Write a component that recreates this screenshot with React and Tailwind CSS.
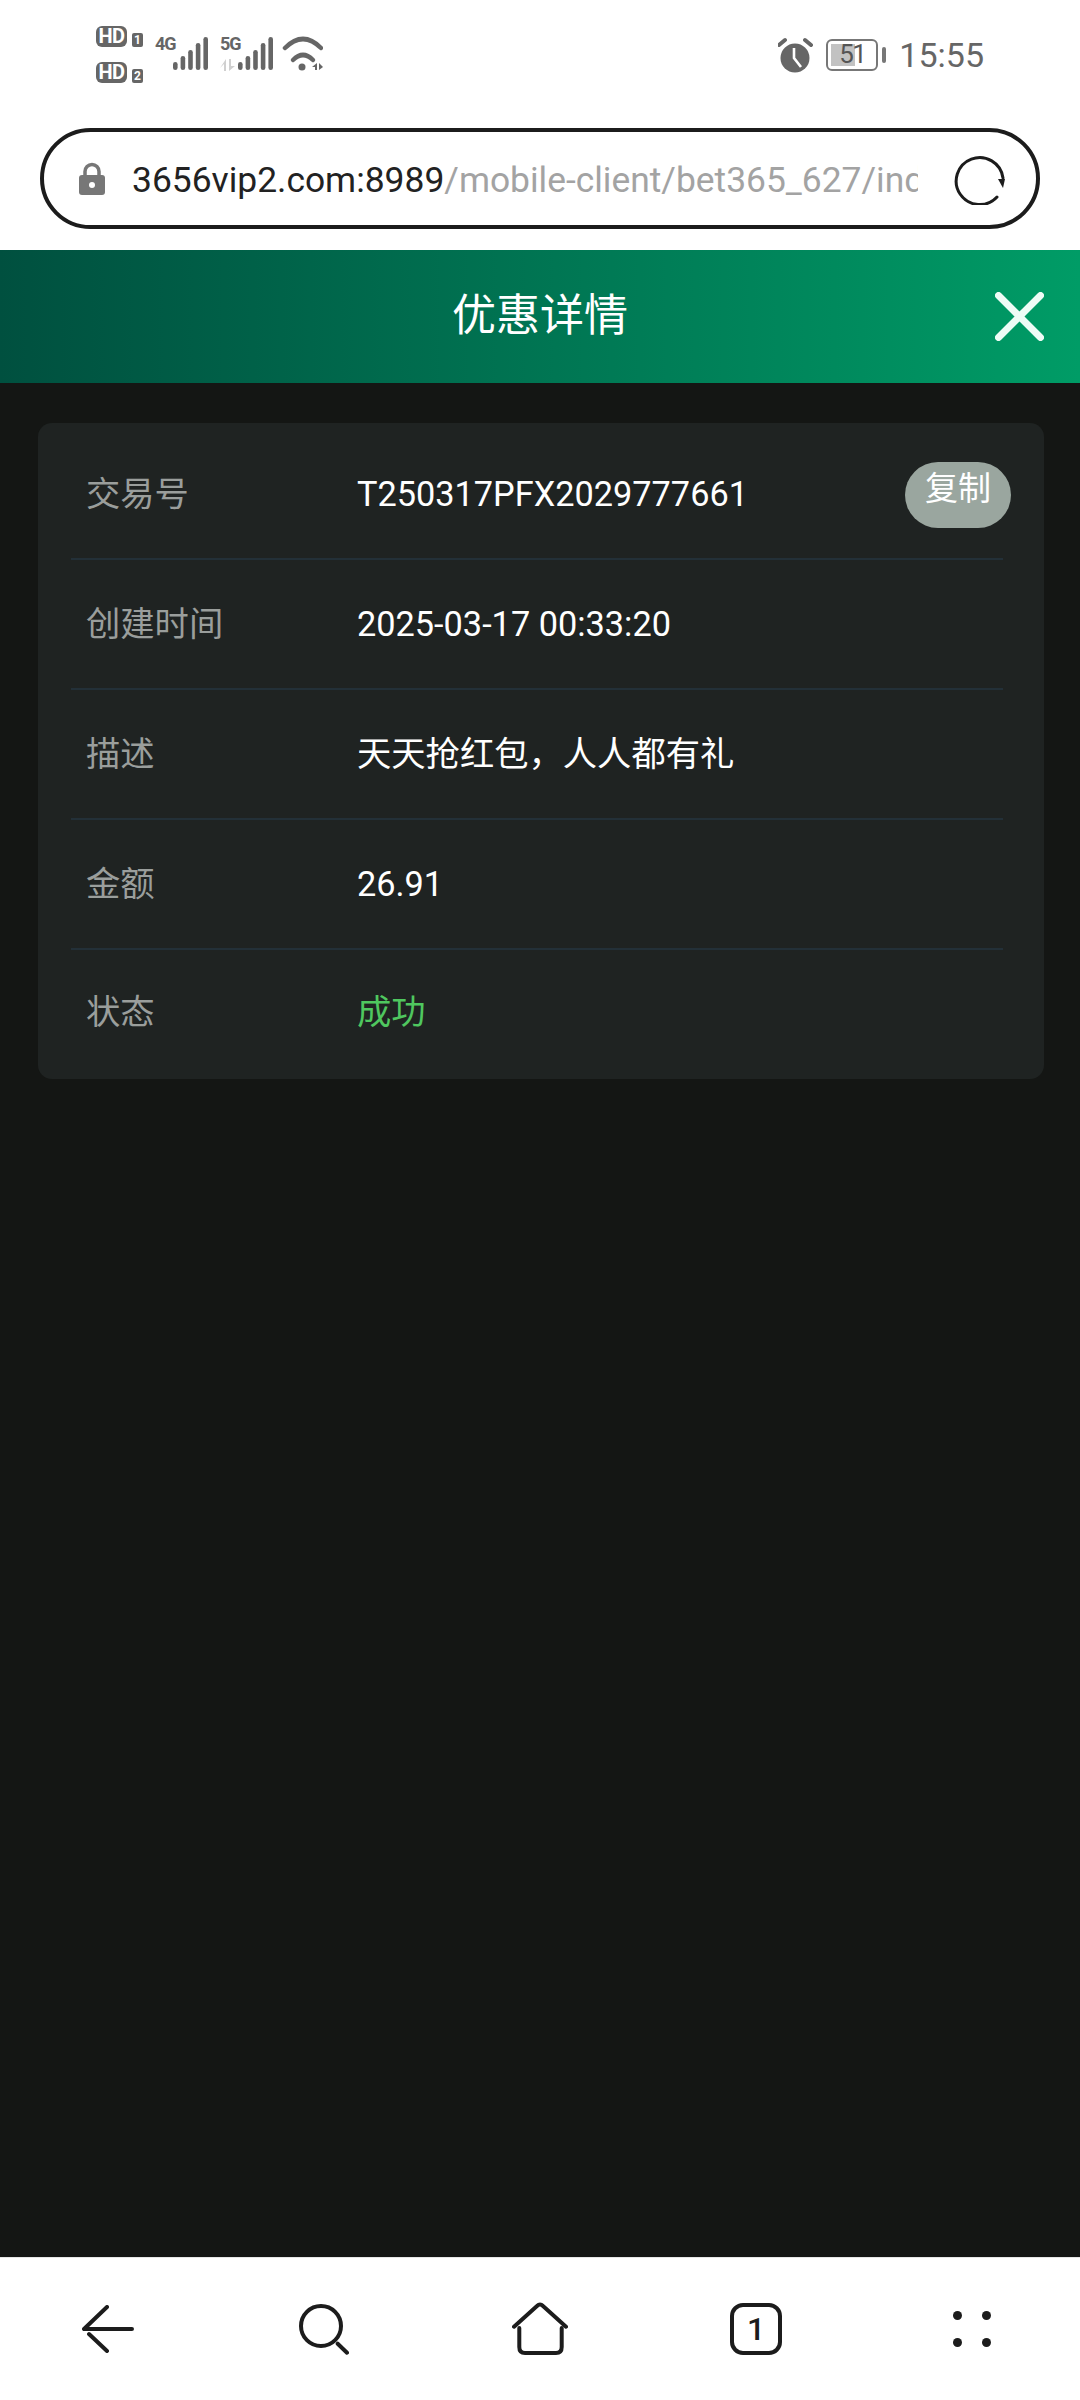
const rows = [
  { label: "交易号", value: "T250317PFX2029777661", copy: true },
  { label: "创建时间", value: "2025-03-17 00:33:20" },
  { label: "描述", value: "天天抢红包，人人都有礼" },
  { label: "金额", value: "26.91" },
  { label: "状态", value: "成功", green: true },
];

const font = "font-['Roboto','Noto_Sans_CJK_SC',sans-serif]";

function Bars({ className }) {
  return (
    <svg width="35" height="33" viewBox="0 0 35 33" className={className} fill="#666">
      <rect x="0" y="25" width="4.6" height="8" rx="2.3" />
      <rect x="7.6" y="19" width="4.6" height="14" rx="2.3" />
      <rect x="15.2" y="13" width="4.6" height="20" rx="2.3" />
      <rect x="22.8" y="6" width="4.6" height="27" rx="2.3" />
      <rect x="30.4" y="0" width="4.6" height="33" rx="2.3" />
    </svg>
  );
}

function HdBadge({ n }) {
  return (
    <div className="flex items-end gap-[5px] h-[21px]">
      <div className="w-[31px] h-[21px] rounded-[6px] bg-[#666] text-white text-[20px] font-bold leading-[21px] text-center tracking-[-0.5px]">
        HD
      </div>
      <div className="w-[11px] h-[14px] rounded-[2px] bg-[#666] text-white text-[12px] font-bold leading-[14px] text-center">
        {n}
      </div>
    </div>
  );
}

function StatusBar() {
  return (
    <div className={`flex items-start justify-between h-[128px] pl-[96px] pr-[96px] ${font}`}>
      <div className="flex items-start pt-[26px]">
        <div className="flex flex-col gap-[15px]">
          <HdBadge n="1" />
          <HdBadge n="2" />
        </div>
        <div className="relative ml-[12px] mt-[9px] w-[56px] h-[36px]">
          <span className="absolute left-0 top-[1px] text-[18px] font-bold leading-[16px] text-[#666] tracking-[-1px]">4G</span>
          <Bars className="absolute left-[18px] top-[2px]" />
        </div>
        <div className="relative ml-[9px] mt-[9px] w-[56px] h-[36px]">
          <span className="absolute left-0 top-[1px] text-[18px] font-bold leading-[16px] text-[#666] tracking-[-1px]">5G</span>
          <svg width="16" height="12" viewBox="0 0 16 12" className="absolute left-0 top-[24px]" fill="#d0d0d0">
            <path d="M6 0 V12 H4 V5 L0 9 Z" />
            <path d="M9 0 H11 V7 L15 7 L9 12 Z" />
          </svg>
          <Bars className="absolute left-[18px] top-[2px]" />
        </div>
        <svg width="42" height="36" viewBox="0 0 42 36" className="ml-[5px] mt-[9px]" fill="none" stroke="#666" strokeLinecap="round">
          <path d="M4 13 Q22 -5 40 13" strokeWidth="4.5" />
          <path d="M12 25 Q22 15 32 25" strokeWidth="4.5" />
          <circle cx="21" cy="32" r="3.5" fill="#666" stroke="none" />
          <path d="M36 28 V35 H34 V32 H31 Z" fill="#666" stroke="none" />
          <path d="M38 28 L42 32 L38 35 Z" fill="#666" stroke="none" />
        </svg>
      </div>
      <div className="flex items-center pt-[35px]">
        <svg width="36" height="38" viewBox="0 0 36 38" fill="none" className="mr-[12px]">
          <circle cx="17" cy="22" r="14.5" fill="#666" />
          <path d="M16 12 V22 L23 31" stroke="#fff" strokeWidth="2.6" />
          <path d="M1 9 L7 4 M33 9 L27 4" stroke="#666" strokeWidth="4" strokeLinecap="round" />
        </svg>
        <div className="relative w-[52px] h-[32px] rounded-[6px] border-[2.5px] border-[#777] p-[3px]">
          <div className="w-[24px] h-full bg-[#c2c2c2]" />
          <span className="absolute inset-0 text-center text-[26px] tracking-[-1.5px] leading-[27px] text-[#555]">51</span>
        </div>
        <div className="ml-[4px] w-[4px] h-[16px] rounded-[2px] bg-[#777]" />
        <span className="ml-[13px] text-[34px] leading-[40px] text-[#666]">15:55</span>
      </div>
    </div>
  );
}

function UrlBar() {
  return (
    <div className={`h-[122px] pl-[40px] pr-[40px] ${font}`}>
      <div className="flex items-center h-[101px] rounded-full border-[4px] border-[#1c1c1c] pl-[34px] pr-[30px]">
        <svg width="28" height="34" viewBox="0 0 28 34" className="shrink-0">
          <path d="M7 15 V9.5 a7 7 0 0 1 14 0 V15" fill="none" stroke="#777" strokeWidth="3.5" />
          <rect x="1" y="13" width="26" height="20" rx="3" fill="#777" />
          <circle cx="14" cy="23" r="3" fill="#fff" />
        </svg>
        <div className="ml-[26px] w-[786px] overflow-hidden whitespace-nowrap pt-[2px] text-[35.4px] leading-[44px]">
          <span className="text-[#222]">3656vip2.com:8989</span>
          <span className="text-[#a3a3a3]">/mobile-client/bet365_627/index.html</span>
        </div>
        <svg width="52" height="52" viewBox="0 0 52 52" className="ml-auto shrink-0" fill="none">
          <path d="M49 25 A23.5 23.5 0 1 0 43 44" stroke="#1c1c1c" strokeWidth="3" strokeLinecap="round" />
          <path d="M44 26 L51 26 L49 35 Z" fill="#1c1c1c" />
        </svg>
      </div>
    </div>
  );
}

function Header() {
  return (
    <div className={`relative flex items-center justify-center h-[133px] pb-[2px] bg-gradient-to-r from-[#00503f] to-[#009c66] ${font}`}>
      <span className="text-white text-[44px] leading-[56px]">优惠详情</span>
      <svg width="49" height="49" viewBox="0 0 49 49" className="absolute right-[36px] top-[42px]" fill="none" stroke="#eefcf6" strokeWidth="7" strokeLinecap="round">
        <path d="M3.5 3.5 L45.5 45.5 M45.5 3.5 L3.5 45.5" />
      </svg>
    </div>
  );
}

function Row({ row, last }) {
  return (
    <div className={`relative flex items-center ml-[33px] mr-[41px] pl-[15px] ${last ? "h-[124px]" : "h-[130px] border-b-2 border-[#233038]"}`}>
      <span className="w-[271px] text-[34.3px] text-[#9a9e9c] leading-[44px]">{row.label}</span>
      <span className={`text-[34.3px] leading-[44px] ${row.green ? "text-[#4fc75f]" : "text-white"}`}>{row.value}</span>
      {row.copy && (
        <div className="absolute right-[-8px] top-[32px] w-[106px] h-[66px] rounded-full bg-[#9aa69f] text-white text-[33px] text-center leading-[54px]">
          复制
        </div>
      )}
    </div>
  );
}

function BottomNav() {
  return (
    <div className={`grid grid-cols-5 items-center justify-items-center h-[143px] bg-white border-t border-[#e5e5e5] ${font}`}>
      <svg width="52" height="48" viewBox="0 0 52 48" fill="none" stroke="#1c1c1c" strokeWidth="4" strokeLinecap="round">
        <path d="M2 24 H50 M2 24 L25 2 M7 29 L25 46" />
      </svg>
      <svg width="50" height="52" viewBox="0 0 50 52" fill="none" stroke="#1c1c1c" strokeWidth="4" strokeLinecap="round">
        <circle cx="22" cy="23" r="20" />
        <path d="M38.7 40.7 L48 49.7" />
      </svg>
      <svg width="56" height="54" viewBox="0 0 56 54" fill="none" stroke="#1c1c1c" strokeWidth="4" strokeLinecap="round" strokeLinejoin="round">
        <path d="M2 24.7 L25 4 Q28 1 31 4 L54 24.7" />
        <path d="M7.3 26 V45 Q7.3 51 13 51 H44 Q49.7 51 49.7 45 V26" />
      </svg>
      <div className="flex items-center justify-center w-[52px] h-[52px] rounded-[13px] border-[4px] border-[#1c1c1c] text-[#1c1c1c] text-[32px] font-medium">
        1
      </div>
      <div className="grid grid-cols-2 gap-x-[20px] gap-y-[18px]">
        <div className="w-[9px] h-[9px] rounded-full bg-[#1c1c1c]" />
        <div className="w-[9px] h-[9px] rounded-full bg-[#1c1c1c]" />
        <div className="w-[9px] h-[9px] rounded-full bg-[#1c1c1c]" />
        <div className="w-[9px] h-[9px] rounded-full bg-[#1c1c1c]" />
      </div>
    </div>
  );
}

export default function App() {
  return (
    <div className="flex flex-col w-[1080px] h-[2400px] bg-white overflow-hidden">
      <StatusBar />
      <UrlBar />
      <Header />
      <div className={`flex-1 bg-[#141614] pt-[40px] pl-[38px] pr-[36px] ${font}`}>
        <div className="rounded-[14px] bg-[#1f2322] pt-[7px] pb-[5px]">
          {rows.map((row, i) => (
            <Row key={row.label} row={row} last={i === rows.length - 1} />
          ))}
        </div>
      </div>
      <BottomNav />
    </div>
  );
}
